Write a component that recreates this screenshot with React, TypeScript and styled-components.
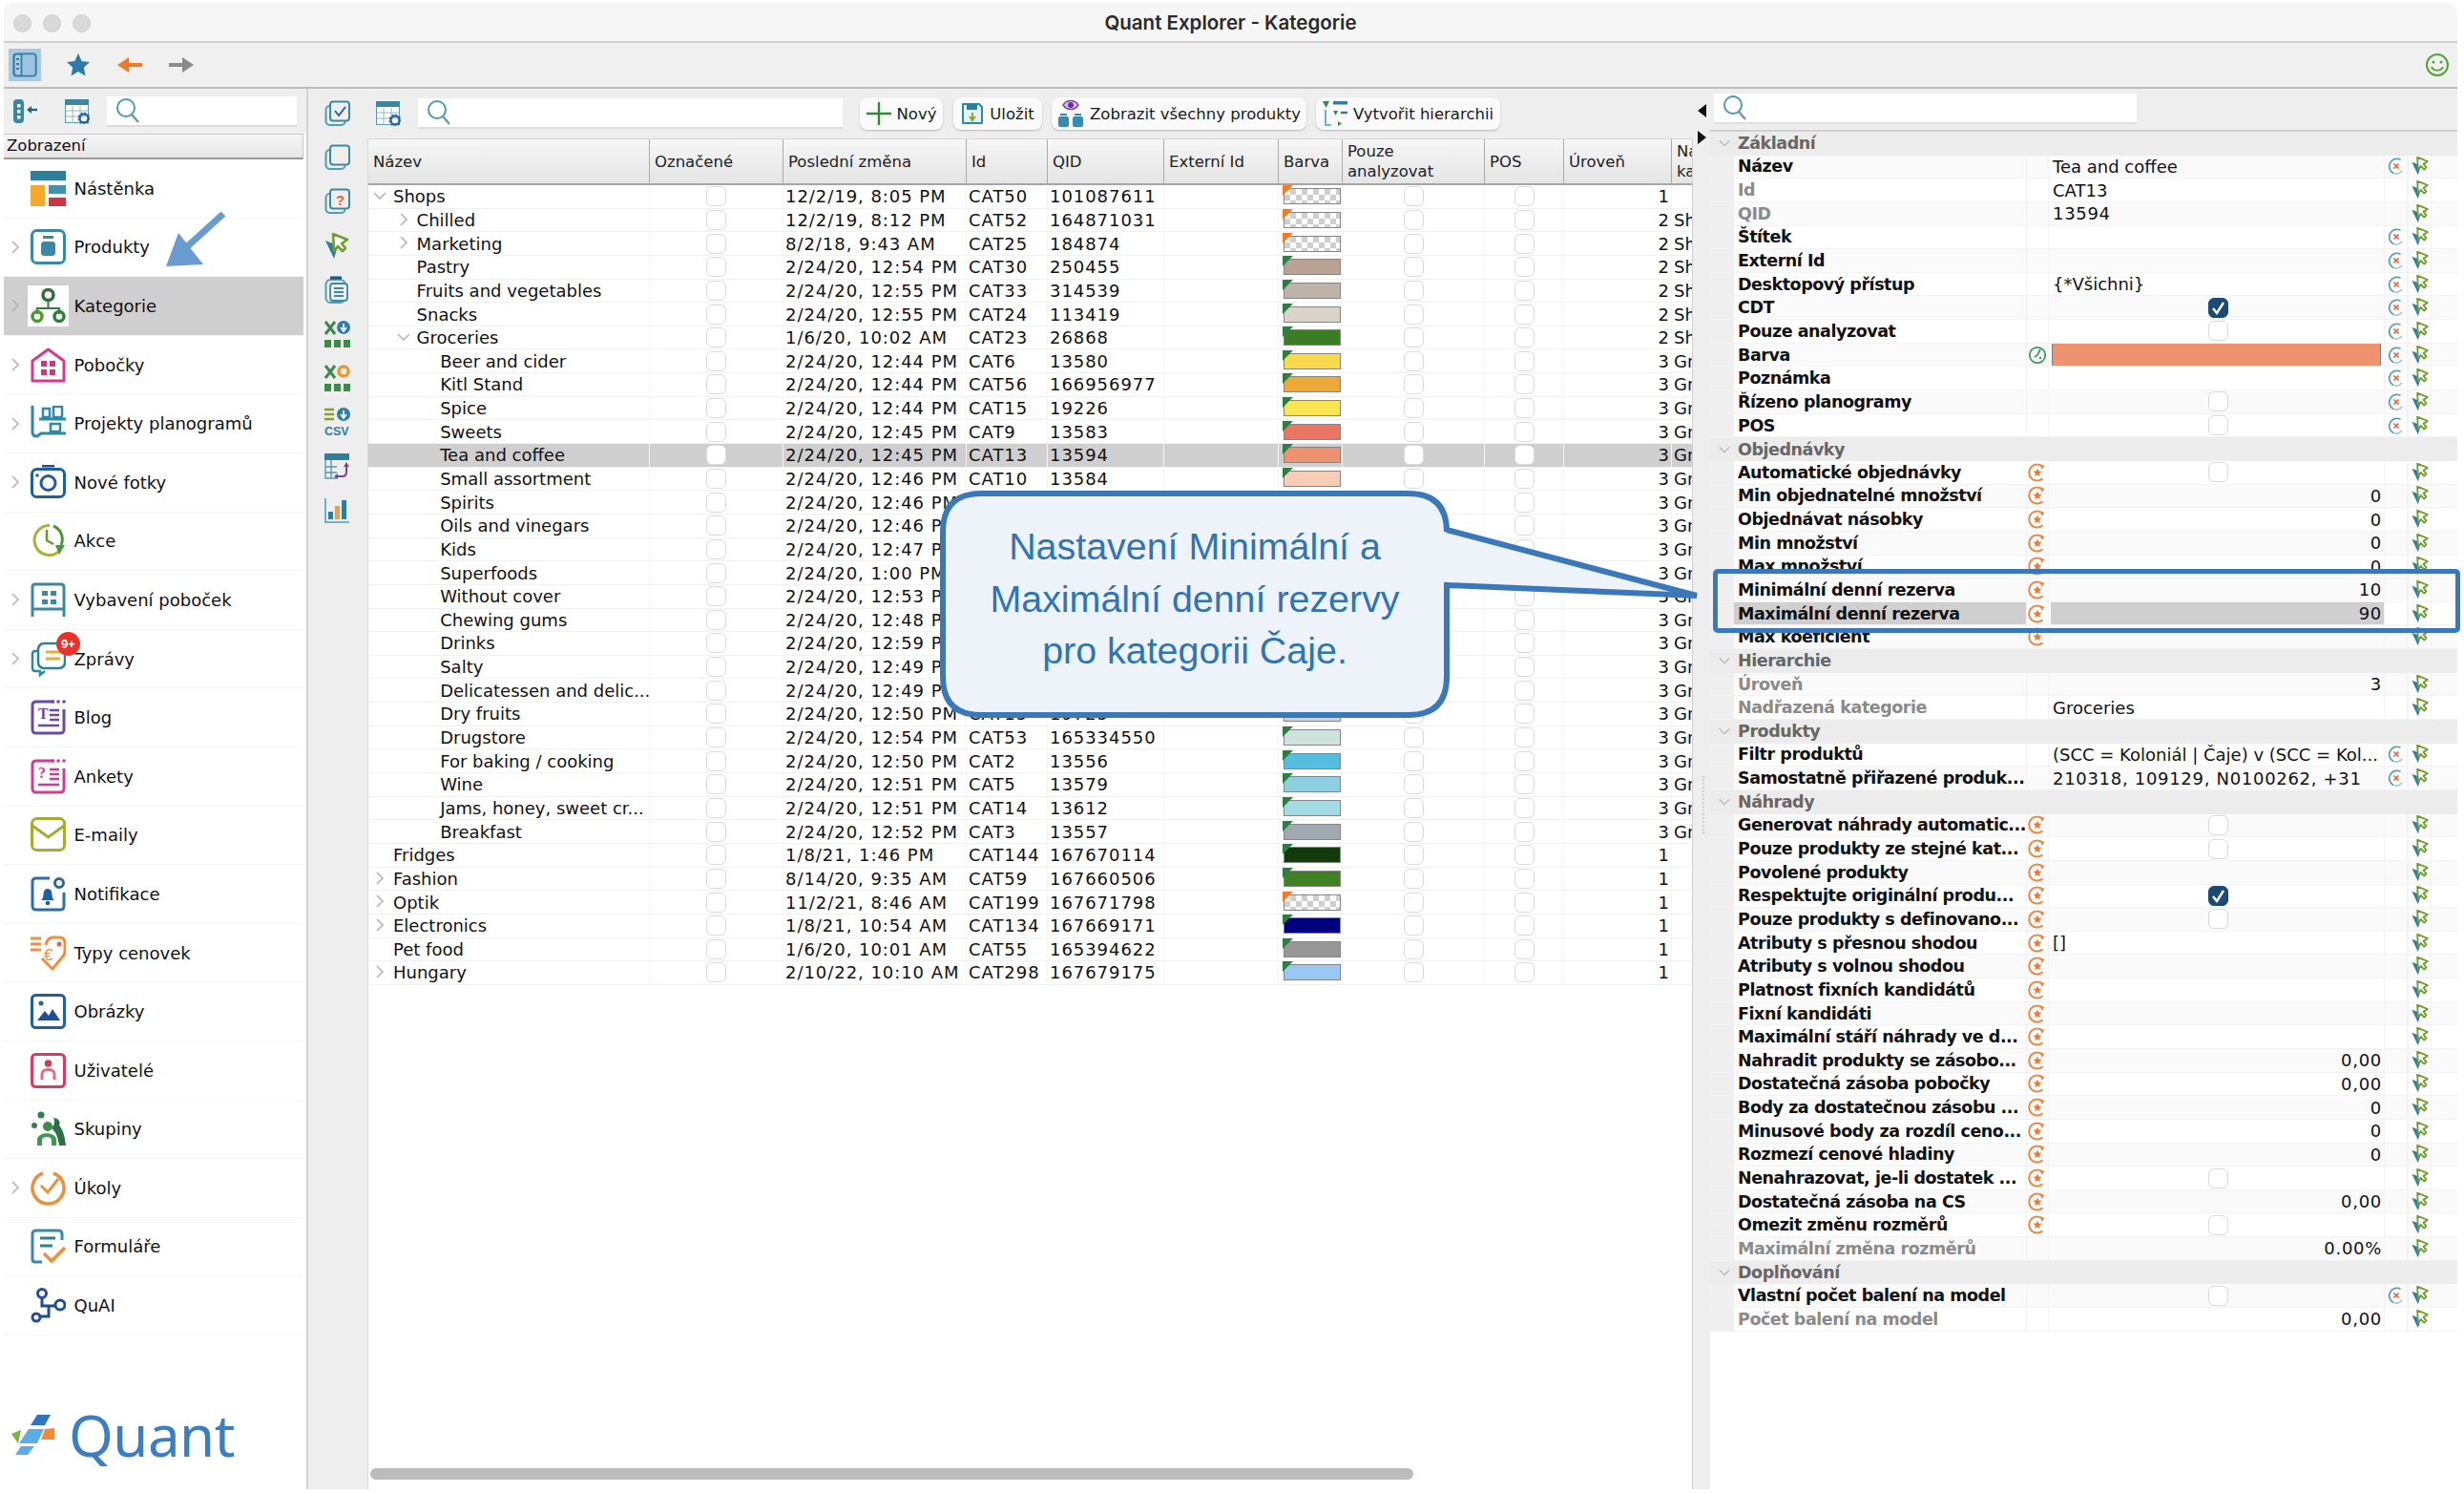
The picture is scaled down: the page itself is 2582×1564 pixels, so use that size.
import React from "react";
import styled, { createGlobalStyle } from "styled-components";

const BLUE = "#3a78b9";
const ROW = 24.65;
const FONT = `"DejaVu Sans", "Liberation Sans", sans-serif`;

const Global = createGlobalStyle`
  html, body { margin: 0; padding: 0; background: #fff; }
  #root { width: 2582px; height: 1564px; overflow: hidden; }
  * { box-sizing: border-box; }
`;

const Page = styled.div`
  width: 2582px;
  height: 1564px;
  padding: 3px 7px 4px 4px;
  background: #fff;
  font-family: ${FONT};
  color: #111;
`;
const Window = styled.div`
  position: relative;
  width: 100%;
  height: 100%;
  display: flex;
  flex-direction: column;
  background: #eeeeee;
  border-radius: 10px 10px 0 0;
`;
const TitleBar = styled.div`
  height: 42px;
  flex: none;
  position: relative;
  display: flex;
  align-items: center;
  justify-content: center;
  background: #f6f6f6;
  border-radius: 10px 10px 0 0;
  border-bottom: 2px solid #d0d0d0;
`;
const Traffic = styled.div`
  position: absolute;
  left: 10px;
  top: 12px;
  display: flex;
  gap: 12px;
`;
const Dot = styled.span`
  width: 19px;
  height: 19px;
  border-radius: 50%;
  background: #d9d9d9;
  border: 1px solid #cfcfcf;
`;
const Title = styled.div`
  font-family: Inter, "Liberation Sans", sans-serif;
  font-weight: 600;
  font-size: 20.5px;
  color: #2a2a2a;
`;
const MainBar = styled.div`
  height: 48px;
  flex: none;
  display: flex;
  align-items: center;
  padding: 0 4px 0 5px;
  background: #f0f0f0;
  border-bottom: 2px solid #bdbdbd;
`;
const MainTool = styled.div<{ $active?: boolean; $w: number; $ml?: number }>`
  width: ${(p) => p.$w}px;
  height: 34px;
  margin-left: ${(p) => p.$ml ?? 0}px;
  display: flex;
  align-items: center;
  justify-content: center;
  background: ${(p) => (p.$active ? "#aac9e6" : "transparent")};
`;
const Spacer = styled.div`
  flex: 1;
`;
const Body = styled.div`
  flex: 1;
  min-height: 0;
  display: flex;
`;
const Sidebar = styled.div`
  width: 319px;
  flex: none;
  display: flex;
  flex-direction: column;
  background: #fff;
  border-right: 2px solid #d2d2d2;
  position: relative;
`;
const SideTools = styled.div`
  height: 47px;
  flex: none;
  display: flex;
  align-items: center;
  gap: 28px;
  padding-left: 8px;
  background: #efefef;
`;
const SideSearch = styled.div`
  width: 199px;
  height: 32px;
  margin-left: -10px;
  display: flex;
  align-items: center;
  padding-left: 9px;
  background: #fff;
  border-bottom: 2px solid #dcdcdc;
`;
const ViewHead = styled.div`
  height: 27px;
  width: 314px;
  flex: none;
  padding-left: 3px;
  font-size: 16.5px;
  line-height: 24px;
  background: linear-gradient(#f6f6f6, #e6e6e6);
  border: 1px solid #c8c8c8;
  border-bottom: 2px solid #9a9a9a;
  border-left: 0;
`;
const NavList = styled.div`
  width: 314px;
  display: flex;
  flex-direction: column;
`;
const NavRow = styled.div<{ $sel?: boolean }>`
  height: 61.6px;
  flex: none;
  display: flex;
  align-items: center;
  position: relative;
  padding-left: 25px;
  background: ${(p) => (p.$sel ? "#cfcfcf" : "#fff")};
  border-bottom: 1px solid #f5f5f5;
`;
const NavChev = styled.span`
  position: absolute;
  left: 4px;
  top: 50%;
  margin-top: -8px;
  display: flex;
`;
const NavIconBox = styled.div<{ $sel?: boolean }>`
  width: 43px;
  height: 43px;
  flex: none;
  display: flex;
  align-items: center;
  justify-content: center;
  background: ${(p) => (p.$sel ? "#fff" : "transparent")};
`;
const NavLabel = styled.div`
  margin-left: 5.5px;
  font-size: 18px;
  color: #111;
`;
const Badge = styled.span`
  position: absolute;
  left: 55px;
  top: 2px;
  width: 25px;
  height: 25px;
  border-radius: 50%;
  background: #e8322a;
  color: #fff;
  font-family: "Liberation Sans", sans-serif;
  font-weight: 700;
  font-size: 13px;
  line-height: 25px;
  text-align: center;
`;
const LogoRow = styled.div`
  margin-top: auto;
  height: 76px;
  margin-bottom: 19px;
  display: flex;
  align-items: center;
  padding-left: 8px;
  gap: 14px;
`;
const LogoText = styled.div`
  font-family: "Noto Sans", Lato, sans-serif;
  font-weight: 400;
  font-size: 60px;
  line-height: 60px;
  color: #3a7fc1;
  letter-spacing: -0.5px;
`;
const Strip = styled.div`
  width: 62px;
  flex: none;
  display: flex;
  flex-direction: column;
  padding: 3px 2px 0 0;
  background: #eeeeee;
`;
const StripSlot = styled.div`
  height: 46.2px;
  flex: none;
  display: flex;
  align-items: center;
  justify-content: center;
`;
const Center = styled.div`
  width: 1389px;
  flex: none;
  display: flex;
  flex-direction: column;
  min-height: 0;
`;
const CenterTools = styled.div`
  height: 52px;
  flex: none;
  display: flex;
  align-items: center;
  padding: 0 0 0 9px;
  background: #eeeeee;
`;
const CenterSearch = styled.div`
  width: 445px;
  height: 32px;
  margin-left: 18px;
  display: flex;
  align-items: center;
  padding-left: 9px;
  background: #fff;
  border-bottom: 2px solid #dedede;
`;
const Btn = styled.div<{ $ml: number; $w: number }>`
  margin-left: ${(p) => p.$ml}px;
  width: ${(p) => p.$w}px;
  height: 34px;
  display: flex;
  align-items: center;
  justify-content: center;
  gap: 6px;
  background: #fafafa;
  border-radius: 8px;
  box-shadow: 0 1px 2px rgba(0, 0, 0, 0.22);
  font-size: 16.5px;
  white-space: nowrap;
  color: #1a1a1a;
`;
const TableWrap = styled.div`
  flex: 1;
  min-height: 0;
  display: flex;
  flex-direction: column;
  background: #fff;
  border-top: 1px solid #d8d8d8;
  border-left: 1px solid #d8d8d8;
  border-right: 1px solid #d0d0d0;
`;
const COLS = "295px 140px 192px 85px 122px 120px 67px 149px 83px 113px 21px";
const HeadRow = styled.div`
  height: 48px;
  flex: none;
  display: grid;
  grid-template-columns: ${COLS};
  background: linear-gradient(#f6f6f6, #e5e5e5);
  border-bottom: 2px solid #a6a6a6;
`;
const HeadCell = styled.div`
  display: flex;
  align-items: center;
  padding-left: 5px;
  font-size: 16.5px;
  line-height: 21px;
  border-right: 1px solid #ababab;
  overflow: hidden;
  white-space: pre-line;
  color: #222;
  &:last-child { border-right: 0; }
`;
const Rows = styled.div`
  flex: 1;
  min-height: 0;
`;
const TRow = styled.div<{ $sel?: boolean }>`
  height: ${ROW}px;
  display: grid;
  grid-template-columns: ${COLS};
  background: ${(p) => (p.$sel ? "#cfcfcf" : "#fff")};
  border-bottom: 1px solid #f1f1f1;
  font-size: 18px;
`;
const NameCell = styled.div<{ $lvl: number }>`
  position: relative;
  display: flex;
  align-items: center;
  padding-left: ${(p) => 26 + p.$lvl * 24.6}px;
  border-right: 1px solid #f5f5f5;
  white-space: nowrap;
  overflow: hidden;
`;
const TreeChev = styled.span<{ $lvl: number }>`
  position: absolute;
  left: ${(p) => 4 + p.$lvl * 24.6}px;
  top: 3px;
  display: flex;
`;
const Cell = styled.div<{ $right?: boolean; $num?: boolean }>`
  display: flex;
  align-items: center;
  justify-content: ${(p) => (p.$right ? "flex-end" : "flex-start")};
  padding: ${(p) => (p.$right ? "0 1px 0 0" : "0 0 0 2px")};
  border-right: 1px solid #f5f5f5;
  white-space: nowrap;
  overflow: hidden;
  letter-spacing: ${(p) => (p.$num ? "0.95px" : "0")};
  &:last-child { border-right: 0; }
`;
const BoxCell = styled.div`
  display: flex;
  align-items: center;
  justify-content: center;
  border-right: 1px solid #f5f5f5;
`;
const Check = styled.span<{ $on?: boolean }>`
  width: 21px;
  height: 21px;
  display: flex;
  align-items: center;
  justify-content: center;
  background: ${(p) => (p.$on ? "#1d4a72" : "#fff")};
  border: 1px solid ${(p) => (p.$on ? "#1d4a72" : "#d9d9d9")};
  border-radius: 6px;
`;
const Swatch = styled.span<{ $c?: string }>`
  position: relative;
  display: block;
  width: 60px;
  height: 17px;
  margin-left: 3px;
  border: 1.5px solid #858585;
  background: ${(p) => p.$c || "repeating-conic-gradient(#cfcfcf 0 25%, #fff 0 50%) 0 0 / 12px 12px"};
`;
const Corner = styled.span<{ $c: string }>`
  position: absolute;
  left: -2px;
  top: -4px;
  width: 0;
  height: 0;
  border-top: 11px solid ${(p) => p.$c};
  border-right: 11px solid transparent;
`;
const ScrollTrack = styled.div`
  height: 32px;
  flex: none;
  display: flex;
  align-items: center;
  padding: 0 0 0 2px;
  margin-top: auto;
`;
const ScrollThumb = styled.div`
  width: 1093px;
  height: 12px;
  border-radius: 6px;
  background: #bcbcbc;
`;
const Splitter = styled.div`
  width: 18px;
  flex: none;
  position: relative;
  background: #eeeeee;
  display: flex;
  flex-direction: column;
  align-items: center;
  padding-top: 16px;
  gap: 14px;
`;
const Grip = styled.div`
  position: absolute;
  left: 10px;
  top: 720px;
  height: 60px;
  border-left: 2px dotted #cfcfcf;
`;
const Right = styled.div`
  flex: 1;
  min-width: 0;
  display: flex;
  flex-direction: column;
  background: #fff;
`;
const RightTools = styled.div`
  height: 45px;
  flex: none;
  padding: 5px 0 0 4px;
  background: #eeeeee;
  border-bottom: 2px solid #cfcfcf;
`;
const RightSearch = styled.div`
  width: 443px;
  height: 32px;
  display: flex;
  align-items: center;
  padding-left: 9px;
  background: #fff;
  border-bottom: 2px solid #dedede;
`;
const PropCols = "25px 306px 24px 351px 25px 25px 26px";
const GroupRow = styled.div`
  height: ${ROW}px;
  flex: none;
  display: flex;
  align-items: center;
  background: #ececec;
  font-size: 17.5px;
  font-weight: 700;
  letter-spacing: -0.45px;
  color: #666;
`;
const GroupChev = styled.span`
  width: 29px;
  padding-left: 8px;
  display: flex;
`;
const PropRow = styled.div<{ $odd: boolean }>`
  height: ${ROW}px;
  flex: none;
  display: grid;
  grid-template-columns: ${PropCols};
  background: ${(p) => (p.$odd ? "#fafafa" : "#fff")};
  border-bottom: 1px solid #f3f3f3;
  font-size: 18px;
`;
const Gutter = styled.div`
  background: #efefef;
`;
const Label = styled.div<{ $dis?: boolean; $sel?: boolean }>`
  display: flex;
  align-items: center;
  padding-left: 4px;
  font-weight: 700;
  font-size: 17.5px;
  letter-spacing: -0.45px;
  color: ${(p) => (p.$dis ? "#8a8a8a" : "#111")};
  background: ${(p) => (p.$sel ? "#cfcfcf" : "transparent")};
  white-space: nowrap;
  overflow: hidden;
`;
const IconCell = styled.div`
  display: flex;
  align-items: center;
  justify-content: center;
  border-left: 1px solid #f3f3f3;
  border-right: 1px solid #f3f3f3;
`;
const Value = styled.div<{ $right?: boolean; $center?: boolean; $sel?: boolean; $num?: boolean }>`
  display: flex;
  align-items: center;
  justify-content: ${(p) => (p.$right ? "flex-end" : p.$center ? "center" : "flex-start")};
  padding: ${(p) => (p.$right ? "0 2px 0 0" : "0 0 0 4px")};
  margin-left: ${(p) => (p.$sel ? "2px" : "0")};
  background: ${(p) => (p.$sel ? "#cfcfcf" : "transparent")};
  white-space: nowrap;
  overflow: hidden;
  letter-spacing: ${(p) => (p.$num ? "0.7px" : "0")};
`;
const ColorBar = styled.span`
  display: block;
  width: 345px;
  height: 25px;
  margin-left: -1px;
  background: #ee9270;
  border: 1.5px solid #808080;
`;

const CalloutWrap = styled.div`
  position: absolute;
  left: 976px;
  top: 506px;
  width: 810px;
  height: 253px;
`;
const CalloutText = styled.div`
  position: absolute;
  left: 8px;
  top: 36px;
  width: 528px;
  text-align: center;
  font-family: "Liberation Sans", Arial, sans-serif;
  font-size: 39.4px;
  line-height: 54.5px;
  color: #2f74b5;
`;
const Highlight = styled.div`
  position: absolute;
  left: 1791px;
  top: 593px;
  width: 783px;
  height: 67px;
  border: 5px solid ${BLUE};
  border-radius: 5px;
`;
const ArrowOverlay = styled.svg`
  position: absolute;
  left: 165px;
  top: 216px;
`;

/* ---------- icons ---------- */
const Chevron = ({ open, s = 16, c = "#b5b5b5" }: { open?: boolean; s?: number; c?: string }) => (
  <svg width={s} height={s} viewBox="0 0 16 16" fill="none" stroke={c} strokeWidth="1.6">
    {open ? <path d="M2 5l6 6 6-6" /> : <path d="M5 2l6 6-6 6" />}
  </svg>
);
const SearchIcon = () => (
  <svg width="26" height="28" viewBox="0 0 26 28" fill="none">
    <circle cx="11" cy="11" r="9" stroke="#4a9ab0" strokeWidth="2" />
    <path d="M17 18l7 8" stroke="#6d95b5" strokeWidth="2.4" />
  </svg>
);
const TableGear = () => (
  <svg width="26" height="26" viewBox="0 0 26 26">
    <rect x="0.5" y="0.5" width="24" height="24" fill="#fff" stroke="#5a98ad" />
    <rect x="0" y="0" width="25" height="6" fill="#3c86a0" />
    <path d="M1 12h23M1 18h23M8 7v18M16 7v18" stroke="#8fb8c6" />
    <circle cx="20" cy="20" r="4.5" fill="none" stroke="#2a5fa8" strokeWidth="2.4" />
    <circle cx="20" cy="20" r="6" fill="none" stroke="#2a5fa8" strokeWidth="1.2" strokeDasharray="2 2" />
  </svg>
);
const CollapseIcon = () => (
  <svg width="28" height="28" viewBox="0 0 28 28">
    <rect x="2" y="1" width="11" height="25" rx="4" fill="#3c86a0" />
    <rect x="6" y="6" width="3.5" height="3.5" fill="#fff" />
    <rect x="6" y="12" width="3.5" height="3.5" fill="#fff" />
    <rect x="6" y="18" width="3.5" height="3.5" fill="#fff" />
    <path d="M27 12h-8" stroke="#2a5f80" strokeWidth="2.4" />
    <path d="M16 12l5-4v8z" fill="#2a5f80" />
  </svg>
);
const PanelIcon = () => (
  <svg width="26" height="26" viewBox="0 0 26 26" fill="none">
    <rect x="1.5" y="1.5" width="23" height="23" rx="3" stroke="#2e7f9e" strokeWidth="2.2" />
    <rect x="9.5" y="2.5" width="14" height="21" fill="#9dc3de" />
    <path d="M9.5 2v22" stroke="#2e7f9e" strokeWidth="1.8" />
    <path d="M4 7h3M4 12h3M4 17h3" stroke="#2e7f9e" strokeWidth="1.8" />
  </svg>
);
const Star = () => (
  <svg width="26" height="26" viewBox="0 0 26 26">
    <path d="M13 1l3.6 8 8.4 1-6.2 5.8 1.7 8.7L13 20l-7.5 4.5 1.7-8.7L1 10l8.4-1z" fill="#2b7aa8" />
  </svg>
);
const ArrowH = ({ dir, c }: { dir: "l" | "r"; c: string }) => (
  <svg width="26" height="20" viewBox="0 0 26 20">
    {dir === "l" ? (
      <path d="M0 10L12 2v6h14v4H12v6z" fill={c} />
    ) : (
      <path d="M26 10L14 2v6H0v4h14v6z" fill={c} />
    )}
  </svg>
);
const Smile = () => (
  <svg width="26" height="26" viewBox="0 0 26 26" fill="none" stroke="#52a335" strokeWidth="2">
    <circle cx="13" cy="13" r="11" />
    <circle cx="9" cy="10" r="1.5" fill="#52a335" stroke="none" />
    <circle cx="17" cy="10" r="1.5" fill="#52a335" stroke="none" />
    <path d="M7 15c2 5 10 5 12 0" />
  </svg>
);

const Stack = ({ inner }: { inner?: React.ReactNode }) => (
  <svg width="27" height="28" viewBox="0 0 27 28" fill="none">
    <rect x="1.5" y="6" width="20" height="20" rx="4" stroke="#4e9eb5" strokeWidth="2" />
    <rect x="6" y="1.5" width="20" height="20" rx="3" fill="#eee" stroke="#3f87a2" strokeWidth="2" />
    {inner}
  </svg>
);
const CursorIcon = ({ s = 26 }: { s?: number }) => (
  <svg width={s} height={s} viewBox="0 0 26 28" fill="none">
    <path d="M1 8l9 19 3-10 3-3z" fill="#2e7f9e" />
    <path d="M9 1l15 6-6 4 4 5-3 3-5-5-4 5z" fill="#fff" stroke="#6f9e2c" strokeWidth="2.6" strokeLinejoin="round" />
  </svg>
);
const DocIcon = () => (
  <svg width="26" height="30" viewBox="0 0 26 30" fill="none">
    <rect x="1.5" y="4" width="20" height="24" rx="5" stroke="#4e9eb5" strokeWidth="2" />
    <rect x="6" y="8" width="18" height="18" rx="3" fill="#eee" stroke="#3f87a2" strokeWidth="1.8" />
    <path d="M6 2h12" stroke="#1f4f8f" strokeWidth="3" />
    <path d="M10 13h10M10 17h10M10 21h10" stroke="#3f87a2" strokeWidth="1.8" />
  </svg>
);
const XoIcon = ({ orange }: { orange?: boolean }) => (
  <svg width="27" height="30" viewBox="0 0 27 30" fill="none">
    <path d="M1 2l10 13M11 2L1 15" stroke="#3f8a4a" strokeWidth="3" />
    {orange ? (
      <circle cx="20" cy="8" r="5" stroke="#e8993a" strokeWidth="3.5" />
    ) : (
      <>
        <circle cx="20" cy="8" r="7" fill="#2e7fa8" />
        <path d="M20 4v7M17 8l3 4 3-4" stroke="#fff" strokeWidth="1.8" />
      </>
    )}
    <rect x="0" y="21" width="7" height="8" fill="#3f8a4a" />
    <rect x="10" y="21" width="7" height="8" fill="#3f8a4a" />
    <rect x="20" y="21" width="7" height="8" fill="#3f8a4a" />
  </svg>
);
const CsvIcon = () => (
  <svg width="27" height="32" viewBox="0 0 27 32" fill="none">
    <path d="M0 3h10M0 8h10M0 13h10" stroke="#8a9a2c" strokeWidth="2.6" />
    <circle cx="20" cy="8" r="7" fill="#2e7fa8" />
    <path d="M20 4v7M17 8l3 4 3-4" stroke="#fff" strokeWidth="1.8" />
    <text x="0" y="30" fontFamily="Liberation Sans" fontWeight="700" fontSize="12.5" fill="#2e7fa8">CSV</text>
  </svg>
);
const TableArrow = () => (
  <svg width="27" height="27" viewBox="0 0 27 27" fill="none">
    <rect x="0" y="0" width="26" height="7" fill="#2e7f9e" />
    <path d="M1 7v19h12M1 14h12M1 20h12M7 7v19" stroke="#5a98ad" strokeWidth="1.4" />
    <path d="M14 24h5c3 0 4-2 4-5v-6" stroke="#7a3fa8" strokeWidth="2" />
    <path d="M23 9l3 5h-6z" fill="#7a3fa8" />
    <path d="M14 21v6l-4-3z" fill="#7a3fa8" />
  </svg>
);
const BarsIcon = () => (
  <svg width="27" height="27" viewBox="0 0 27 27">
    <path d="M1 1v25h25" fill="none" stroke="#4e9eb5" strokeWidth="1.6" />
    <rect x="4" y="15" width="5" height="8" fill="#2e7f9e" />
    <rect x="11" y="9" width="5" height="14" fill="#f09a38" />
    <rect x="18" y="3" width="5" height="20" fill="#2e7f9e" />
  </svg>
);
const StarRound = () => (
  <svg width="20" height="20" viewBox="0 0 20 20" fill="none">
    <path d="M15.5 3.8A8.5 8.5 0 1 0 15.5 16.2" stroke="#ea8a45" strokeWidth="2" />
    <path d="M12.5 1l5 2-3 4z" fill="#ea8a45" />
    <path d="M10 5.500l1.300 3 3.200.3-2.400 2.100.7 3.100-2.800-1.600-2.800 1.600.7-3.100-2.400-2.100 3.200-.3z" fill="#ea7a35" />
  </svg>
);
const GreenRound = () => (
  <svg width="20" height="20" viewBox="0 0 20 20" fill="none">
    <circle cx="10" cy="10" r="8.200" stroke="#3d9a5a" strokeWidth="1.800" />
    <path d="M13 4l-3 6-3 2" stroke="#3d9a5a" strokeWidth="1.800" />
    <circle cx="13" cy="13" r="1.200" fill="#3d9a5a" />
  </svg>
);
const Revert = () => (
  <svg width="18" height="20" viewBox="0 0 18 20" fill="none">
    <path d="M13.500 3.200A8 8 0 0 0 6 17.500" stroke="#4e9eb5" strokeWidth="1.700" />
    <path d="M6 17.500a8 8 0 0 0 9-2.500" stroke="#a8c8d4" strokeWidth="1.700" />
    <path d="M6.500 7.500l5 5M11.500 7.500l-5 5" stroke="#e8603a" strokeWidth="1.700" />
  </svg>
);

const IconJar = () => (
  <svg width="37" height="37" viewBox="0 0 37 37" fill="none">
    <rect x="1.5" y="1.500" width="34" height="34" rx="5" stroke="#3a88a8" strokeWidth="3" />
    <rect x="13" y="7" width="11" height="3" fill="#3a88a8" />
    <rect x="11" y="13" width="15" height="15" rx="3.500" fill="#3a88a8" />
  </svg>
);
const IconDash = () => (
  <svg width="37" height="37" viewBox="0 0 37 37">
    <rect x="0" y="0" width="37" height="10" fill="#2e7f9e" />
    <rect x="0" y="15" width="15" height="22" fill="#f4a92e" />
    <rect x="19" y="15" width="18" height="9" fill="#4292ad" />
    <rect x="19" y="28" width="18" height="9" fill="#cf3445" />
  </svg>
);
const IconTree = () => (
  <svg width="37" height="37" viewBox="0 0 37 37" fill="none">
    <circle cx="18.500" cy="7" r="5.500" stroke="#2e6f3a" strokeWidth="3.500" />
    <path d="M18.500 13v8M7 27v-6h23v6" stroke="#2e7f3a" strokeWidth="2" />
    <circle cx="7" cy="29.500" r="5" stroke="#4f9a2c" strokeWidth="3.500" />
    <circle cx="30" cy="29.500" r="5" stroke="#2e7f3a" strokeWidth="3.500" />
  </svg>
);
const IconHouse = () => (
  <svg width="37" height="37" viewBox="0 0 37 37" fill="none">
    <path d="M2 14L18.500 2 35 14v21H2z" stroke="#d63a8e" strokeWidth="3" strokeLinejoin="round" />
    <rect x="11" y="14" width="6" height="6" fill="#c83a86" />
    <rect x="20" y="14" width="6" height="6" fill="#c83a86" />
    <rect x="11" y="23" width="6" height="6" fill="#c83a86" />
    <rect x="20" y="23" width="6" height="6" fill="#c83a86" />
  </svg>
);
const IconShelf = () => (
  <svg width="37" height="37" viewBox="0 0 37 37" fill="none" stroke="#2e88a8" strokeWidth="3">
    <path d="M2 0v28c0 3 2 4 5 4l4-3h26" />
    <path d="M9 14h28" />
    <rect x="13" y="3" width="7" height="9" strokeWidth="2.500" />
    <rect x="24" y="1" width="9" height="11" strokeWidth="2.500" />
    <rect x="21" y="19" width="10" height="8" strokeWidth="2.500" />
  </svg>
);
const IconCamera = () => (
  <svg width="37" height="37" viewBox="0 0 37 37" fill="none">
    <rect x="1.500" y="4.500" width="34" height="29" rx="5" stroke="#1f5fa0" strokeWidth="3" />
    <path d="M12 1h13" stroke="#2a4a80" strokeWidth="3" />
    <circle cx="18.500" cy="19" r="7.500" stroke="#2a5a98" strokeWidth="3" />
    <circle cx="7" cy="11" r="1.800" fill="#1f5fa0" />
  </svg>
);
const IconClock = () => (
  <svg width="37" height="37" viewBox="0 0 37 37" fill="none">
    <path d="M20 2.500a15.500 15.500 0 1 0 10 27" stroke="#a4b534" strokeWidth="3" />
    <path d="M24 3a15 15 0 0 1 8 20" stroke="#4a9a3a" strokeWidth="3" />
    <path d="M17 7v11l7 4" stroke="#6a9a2c" strokeWidth="2.500" />
    <path d="M26 23h10l-6 10z" fill="#4a9a3a" />
  </svg>
);
const IconFixture = () => (
  <svg width="37" height="37" viewBox="0 0 37 37" fill="none" stroke="#3a88a8" strokeWidth="3">
    <path d="M2 36V5c0-2 1-3 3-3h27c2 0 3 1 3 3v31" />
    <path d="M2 28h33" />
    <g fill="#3a88a8" stroke="none">
      <rect x="12" y="9" width="6" height="5" />
      <rect x="21" y="9" width="6" height="5" />
      <rect x="12" y="18" width="6" height="5" />
      <rect x="21" y="18" width="6" height="5" />
    </g>
  </svg>
);
const IconChat = () => (
  <svg width="37" height="37" viewBox="0 0 37 37" fill="none">
    <path d="M7 10H5c-2 0-3 1-3 3v15c0 2 1 3 3 3h5v4l5-4" stroke="#2e88a8" strokeWidth="2.500" />
    <rect x="8" y="2" width="28" height="26" rx="6" stroke="#2e7f9e" strokeWidth="2.500" fill="#fff" />
    <path d="M16 11h15M16 18h15" stroke="#f0a83a" strokeWidth="3" />
  </svg>
);
const IconText = ({ c, ch }: { c: string; ch: string }) => (
  <svg width="37" height="37" viewBox="0 0 37 37" fill="none">
    <path d="M25 2H6C3 2 2 3 2 6v25c0 3 1 4 4 4h25c3 0 4-1 4-4V10" stroke={c} strokeWidth="3" />
    <g fill={c}>
      <circle cx="23" cy="2" r="1.800" />
      <circle cx="29" cy="2" r="1.800" />
      <circle cx="35" cy="2" r="1.800" />
    </g>
    <text x="8" y="20" fontFamily="Liberation Serif" fontWeight="700" fontSize="16" fill={c}>{ch}</text>
    <path d="M20 11h10M20 16h10M20 21h10M8 27h22" stroke={c} strokeWidth="2.500" />
  </svg>
);
const IconMail = () => (
  <svg width="37" height="37" viewBox="0 0 37 37" fill="none" stroke="#a3ad2e" strokeWidth="3">
    <rect x="1.500" y="1.500" width="34" height="33" rx="5" />
    <path d="M2 9l16.500 12L35 9" />
  </svg>
);
const IconBell = () => (
  <svg width="37" height="37" viewBox="0 0 37 37" fill="none">
    <path d="M20 2H6C3 2 2 3 2 6v25c0 3 1 4 4 4h25c3 0 4-1 4-4V17" stroke="#2a6fa8" strokeWidth="3" />
    <path d="M11 25c3-2 2-6 3-9 1-4 7-4 8 0 1 3 0 7 3 9z" fill="#1f5fa0" />
    <circle cx="18" cy="28" r="2.300" fill="#1f5fa0" />
    <circle cx="30" cy="7" r="4.500" stroke="#2e6a90" strokeWidth="3" />
  </svg>
);
const IconTag = () => (
  <svg width="37" height="37" viewBox="0 0 37 37" fill="none" stroke="#ee8f3c">
    <path d="M0 3h11M0 9h11M0 15h11" strokeWidth="3" />
    <path d="M16 10c1-5 3-8 8-8h6c4 0 6 2 6 6v9c0 3-1 4-3 6L23 35 12 24" strokeWidth="3" strokeLinejoin="round" />
    <circle cx="30" cy="9" r="2.500" fill="#e8604a" stroke="none" />
    <text x="14" y="26" fontFamily="Liberation Sans" fontSize="17" fill="#ee8f3c" stroke="none">€</text>
  </svg>
);
const IconPicture = () => (
  <svg width="37" height="37" viewBox="0 0 37 37" fill="none">
    <rect x="1.500" y="1.500" width="34" height="34" rx="4" stroke="#1f5fa8" strokeWidth="3" />
    <circle cx="11" cy="10" r="2.500" fill="#1f5fa8" />
    <path d="M7 28l8-10 4 5 4-7 8 12z" fill="#1f4f98" />
  </svg>
);
const IconUser = () => (
  <svg width="37" height="37" viewBox="0 0 37 37" fill="none">
    <rect x="1.500" y="1.500" width="34" height="34" rx="4" stroke="#d83a60" strokeWidth="3" />
    <circle cx="18.500" cy="11" r="3.800" fill="#d83a50" />
    <path d="M12 28v-6c0-6 13-6 13 0v6" stroke="#e86a80" strokeWidth="3" />
  </svg>
);
const IconGroup = () => (
  <svg width="37" height="37" viewBox="0 0 37 37">
    <circle cx="11" cy="4" r="3.500" fill="#2e7f4a" />
    <circle cx="4" cy="15" r="3" fill="#2e7f4a" />
    <circle cx="18" cy="16" r="5" fill="#3a8a4a" />
    <path d="M7 36V30c0-9 20-9 20 0v6h-5v-6c0-4-10-4-10 0v6z" fill="#3f9a4f" />
    <path d="M24 7c5 0 8 4 6 8 4 4 6 12 7 21h-7c-1-8-3-14-8-18 3-3 4-7 2-11z" fill="#2e6f4a" />
  </svg>
);
const IconTask = () => (
  <svg width="37" height="37" viewBox="0 0 37 37" fill="none" stroke="#ee8f3c">
    <path d="M24 3a16.500 16.500 0 1 1-11 0" strokeWidth="3.500" />
    <path d="M11 16l7 7 11-14" strokeWidth="3" />
  </svg>
);
const IconForm = () => (
  <svg width="37" height="37" viewBox="0 0 37 37" fill="none">
    <path d="M33 12V6c0-3-1-4-4-4H6C3 2 2 3 2 6v26c0 2 1 3 3 3h7" stroke="#3a88a8" strokeWidth="3" />
    <path d="M10 10h16M10 18h13" stroke="#2e7f9e" strokeWidth="3" />
    <path d="M14 26l8 8 14-14" stroke="#ee8f3c" strokeWidth="3.500" />
  </svg>
);
const IconNodes = () => (
  <svg width="37" height="37" viewBox="0 0 37 37" fill="none" stroke="#1f4f8f" strokeWidth="3">
    <circle cx="12" cy="6" r="4.500" />
    <circle cx="6" cy="31" r="4" />
    <circle cx="31" cy="18" r="5" />
    <path d="M12 11v8h14M10 30h9V19" />
  </svg>
);
const QuantMark = () => (
  <svg width="46" height="42" viewBox="0 0 46 42">
    <path d="M27 0h14l-6 11H20z" fill="#2f74c0" />
    <path d="M0 20l10-4-3 14z" fill="#7cb342" />
    <path d="M18 15h16l-7 15H8z" fill="#5aaee8" />
    <path d="M35 15l10-1v12H31z" fill="#f08a3a" />
    <path d="M10 33h14l-7 9H4z" fill="#5aaee8" />
  </svg>
);
const PlusIcon = () => (
  <svg width="26" height="26" viewBox="0 0 26 26" fill="none" stroke="#2f8a3a" strokeWidth="2.400">
    <path d="M13 1v24M0 13h26" />
  </svg>
);
const SaveIcon = () => (
  <svg width="24" height="24" viewBox="0 0 24 24" fill="none">
    <path d="M2 2h17l3 3v17H2z" fill="#e6f2f8" stroke="#2e88a8" strokeWidth="2" strokeLinejoin="round" />
    <rect x="6" y="2" width="11" height="6" fill="#2e7f9e" />
    <path d="M12 11v7M9 15l3 4 3-4" stroke="#8aa82c" strokeWidth="2" />
  </svg>
);
const EyeJars = () => (
  <svg width="28" height="30" viewBox="0 0 28 30" fill="none">
    <path d="M6 6c4-6 12-6 16 0-4 6-12 6-16 0z" fill="#d9c2ee" stroke="#7a3fa8" strokeWidth="1.400" />
    <circle cx="14" cy="6" r="3" fill="#6a2fa0" />
    <rect x="1" y="18" width="11" height="11" rx="2" fill="#3a8ab0" />
    <rect x="3" y="15" width="7" height="2" fill="#3a8ab0" />
    <rect x="16" y="18" width="11" height="11" rx="2" fill="#3a8ab0" />
    <rect x="18" y="15" width="7" height="2" fill="#3a8ab0" />
  </svg>
);
const HierIcon = () => (
  <svg width="26" height="28" viewBox="0 0 26 28" fill="none">
    <path d="M0 1h7l-3.500 7z" fill="#3a8a4a" />
    <rect x="11" y="1" width="15" height="3.500" fill="#2e7f9e" />
    <path d="M3 10v16h6" stroke="#4e9eb5" strokeWidth="1.600" />
    <path d="M11 11h5l-2.500 5z" fill="#3a8a4a" />
    <path d="M19 13h7" stroke="#2e7f9e" strokeWidth="2.500" />
    <path d="M16 22v5l4-2.500z" fill="#3a8a4a" />
  </svg>
);

/* ---------- data ---------- */
type Nav = { label: string; icon: React.ReactNode; chev?: boolean; sel?: boolean; badge?: boolean };
const NAV: Nav[] = [
  { label: "Nástěnka", icon: <IconDash /> },
  { label: "Produkty", icon: <IconJar />, chev: true },
  { label: "Kategorie", icon: <IconTree />, chev: true, sel: true },
  { label: "Pobočky", icon: <IconHouse />, chev: true },
  { label: "Projekty planogramů", icon: <IconShelf />, chev: true },
  { label: "Nové fotky", icon: <IconCamera />, chev: true },
  { label: "Akce", icon: <IconClock /> },
  { label: "Vybavení poboček", icon: <IconFixture />, chev: true },
  { label: "Zprávy", icon: <IconChat />, chev: true, badge: true },
  { label: "Blog", icon: <IconText c="#6a4aa0" ch="T" /> },
  { label: "Ankety", icon: <IconText c="#d03a98" ch="?" /> },
  { label: "E-maily", icon: <IconMail /> },
  { label: "Notifikace", icon: <IconBell /> },
  { label: "Typy cenovek", icon: <IconTag /> },
  { label: "Obrázky", icon: <IconPicture /> },
  { label: "Uživatelé", icon: <IconUser /> },
  { label: "Skupiny", icon: <IconGroup /> },
  { label: "Úkoly", icon: <IconTask />, chev: true },
  { label: "Formuláře", icon: <IconForm /> },
  { label: "QuAI", icon: <IconNodes /> },
];

type Row = [string, number, "o" | "c" | "", string, string, string, string | null, string, string];
const d = (t: string) => `2/24/20, ${t} PM`;
const TREE: Row[] = [
  ["Shops", 0, "o", "12/2/19, 8:05 PM", "CAT50", "101087611", null, "1", ""],
  ["Chilled", 1, "c", "12/2/19, 8:12 PM", "CAT52", "164871031", null, "2", "Sh"],
  ["Marketing", 1, "c", "8/2/18, 9:43 AM", "CAT25", "184874", null, "2", "Sh"],
  ["Pastry", 1, "", d("12:54"), "CAT30", "250455", "#b9a294", "2", "Sh"],
  ["Fruits and vegetables", 1, "", d("12:55"), "CAT33", "314539", "#bdb3a9", "2", "Sh"],
  ["Snacks", 1, "", d("12:55"), "CAT24", "113419", "#d9d5ca", "2", "Sh"],
  ["Groceries", 1, "o", "1/6/20, 10:02 AM", "CAT23", "26868", "#3a7d24", "2", "Sh"],
  ["Beer and cider", 2, "", d("12:44"), "CAT6", "13580", "#f6da4c", "3", "Gr"],
  ["Kitl Stand", 2, "", d("12:44"), "CAT56", "166956977", "#eeaa36", "3", "Gr"],
  ["Spice", 2, "", d("12:44"), "CAT15", "19226", "#fbe552", "3", "Gr"],
  ["Sweets", 2, "", d("12:45"), "CAT9", "13583", "#ea7561", "3", "Gr"],
  ["Tea and coffee", 2, "", d("12:45"), "CAT13", "13594", "#ee9270", "3", "Gr"],
  ["Small assortment", 2, "", d("12:46"), "CAT10", "13584", "#f6cdb6", "3", "Gr"],
  ["Spirits", 2, "", d("12:46"), "", "", "#eeeeee", "3", "Gr"],
  ["Oils and vinegars", 2, "", d("12:46"), "", "", "#eeeeee", "3", "Gr"],
  ["Kids", 2, "", d("12:47"), "", "", "#eeeeee", "3", "Gr"],
  ["Superfoods", 2, "", "2/24/20, 1:00 PM", "", "", "#eeeeee", "3", "Gr"],
  ["Without cover", 2, "", d("12:53"), "", "", "#eeeeee", "3", "Gr"],
  ["Chewing gums", 2, "", d("12:48"), "", "", "#eeeeee", "3", "Gr"],
  ["Drinks", 2, "", d("12:59"), "", "", "#eeeeee", "3", "Gr"],
  ["Salty", 2, "", d("12:49"), "", "", "#eeeeee", "3", "Gr"],
  ["Delicatessen and delic...", 2, "", d("12:49"), "", "", "#eeeeee", "3", "Gr"],
  ["Dry fruits", 2, "", d("12:50"), "CAT15", "19725", "#c9d3de", "3", "Gr"],
  ["Drugstore", 2, "", d("12:54"), "CAT53", "165334550", "#cde3dc", "3", "Gr"],
  ["For baking / cooking", 2, "", d("12:50"), "CAT2", "13556", "#55bde0", "3", "Gr"],
  ["Wine", 2, "", d("12:51"), "CAT5", "13579", "#8cd0e2", "3", "Gr"],
  ["Jams, honey, sweet cr...", 2, "", d("12:51"), "CAT14", "13612", "#a3dbe5", "3", "Gr"],
  ["Breakfast", 2, "", d("12:52"), "CAT3", "13557", "#a0a8b0", "3", "Gr"],
  ["Fridges", 0, "", "1/8/21, 1:46 PM", "CAT144", "167670114", "#123a0a", "1", ""],
  ["Fashion", 0, "c", "8/14/20, 9:35 AM", "CAT59", "167660506", "#3f8223", "1", ""],
  ["Optik", 0, "c", "11/2/21, 8:46 AM", "CAT199", "167671798", null, "1", ""],
  ["Electronics", 0, "c", "1/8/21, 10:54 AM", "CAT134", "167669171", "#00007f", "1", ""],
  ["Pet food", 0, "", "1/6/20, 10:01 AM", "CAT55", "165394622", "#969696", "1", ""],
  ["Hungary", 0, "c", "2/10/22, 10:10 AM", "CAT298", "167679175", "#99c8f5", "1", ""],
];
const HEADS = ["Název", "Označené", "Poslední změna", "Id", "QID", "Externí Id", "Barva", "Pouze\nanalyzovat", "POS", "Úroveň", "Nadřazená\nkategorie"];

type P = {
  g?: string;
  l?: string;
  v?: string;
  dis?: boolean;
  st?: boolean;
  rev?: boolean;
  box?: "on" | "off";
  right?: boolean;
  sel?: boolean;
  color?: boolean;
};
const base = (l: string, v?: string, extra: Partial<P> = {}): P => ({ l, v, rev: true, ...extra });
const ord = (l: string, v?: string, extra: Partial<P> = {}): P => ({ l, v, st: true, ...extra });
const PROPS: P[] = [
  { g: "Základní" },
  base("Název", "Tea and coffee"),
  { l: "Id", v: "CAT13", dis: true },
  { l: "QID", v: "13594", dis: true },
  base("Štítek"),
  base("Externí Id"),
  base("Desktopový přístup", "{*Všichni}"),
  base("CDT", undefined, { box: "on" }),
  base("Pouze analyzovat", undefined, { box: "off" }),
  base("Barva", undefined, { color: true }),
  base("Poznámka"),
  base("Řízeno planogramy", undefined, { box: "off" }),
  base("POS", undefined, { box: "off" }),
  { g: "Objednávky" },
  ord("Automatické objednávky", undefined, { box: "off" }),
  ord("Min objednatelné množství", "0", { right: true }),
  ord("Objednávat násobky", "0", { right: true }),
  ord("Min množství", "0", { right: true }),
  ord("Max množství", "0", { right: true }),
  ord("Minimální denní rezerva", "10", { right: true }),
  ord("Maximální denní rezerva", "90", { right: true, sel: true }),
  ord("Max koeficient"),
  { g: "Hierarchie" },
  { l: "Úroveň", v: "3", dis: true, right: true },
  { l: "Nadřazená kategorie", v: "Groceries", dis: true },
  { g: "Produkty" },
  base("Filtr produktů", "(SCC = Koloniál | Čaje) v (SCC = Kol..."),
  base("Samostatně přiřazené produk...", "210318, 109129, N0100262, +31"),
  { g: "Náhrady" },
  ord("Generovat náhrady automatic...", undefined, { box: "off" }),
  ord("Pouze produkty ze stejné kat...", undefined, { box: "off" }),
  ord("Povolené produkty"),
  ord("Respektujte originální produ...", undefined, { box: "on" }),
  ord("Pouze produkty s definovano...", undefined, { box: "off" }),
  ord("Atributy s přesnou shodou", "[]"),
  ord("Atributy s volnou shodou"),
  ord("Platnost fixních kandidátů"),
  ord("Fixní kandidáti"),
  ord("Maximální stáří náhrady ve d..."),
  ord("Nahradit produkty se zásobo...", "0,00", { right: true }),
  ord("Dostatečná zásoba pobočky", "0,00", { right: true }),
  ord("Body za dostatečnou zásobu ...", "0", { right: true }),
  ord("Minusové body za rozdíl ceno...", "0", { right: true }),
  ord("Rozmezí cenové hladiny", "0", { right: true }),
  ord("Nenahrazovat, je-li dostatek ...", undefined, { box: "off" }),
  ord("Dostatečná zásoba na CS", "0,00", { right: true }),
  ord("Omezit změnu rozměrů", undefined, { box: "off" }),
  { l: "Maximální změna rozměrů", v: "0.00%", dis: true, right: true },
  { g: "Doplňování" },
  base("Vlastní počet balení na model", undefined, { box: "off" }),
  { l: "Počet balení na model", v: "0,00", dis: true, right: true },
];

const CheckMark = () => (
  <svg width="15" height="15" viewBox="0 0 15 15" fill="none" stroke="#fff" strokeWidth="2.400">
    <path d="M2 8l4 5 7-11" />
  </svg>
);

export default function App() {
  return (
    <Page>
      <Global />
      <Window>
        <TitleBar>
          <Traffic>
            <Dot />
            <Dot />
            <Dot />
          </Traffic>
          <Title>Quant Explorer - Kategorie</Title>
        </TitleBar>
        <MainBar>
          <MainTool $active $w={34}><PanelIcon /></MainTool>
          <MainTool $w={46} $ml={16}><Star /></MainTool>
          <MainTool $w={46} $ml={8}><ArrowH dir="l" c="#ee7a30" /></MainTool>
          <MainTool $w={46} $ml={8}><ArrowH dir="r" c="#8a8a8a" /></MainTool>
          <Spacer />
          <MainTool $w={34}><Smile /></MainTool>
        </MainBar>
        <Body>
          <Sidebar>
            <SideTools>
              <CollapseIcon />
              <TableGear />
              <SideSearch><SearchIcon /></SideSearch>
            </SideTools>
            <ViewHead>Zobrazení</ViewHead>
            <NavList>
              {NAV.map((n) => (
                <NavRow key={n.label} $sel={n.sel}>
                  {n.chev && <NavChev><Chevron s={16} /></NavChev>}
                  <NavIconBox $sel={n.sel}>{n.icon}</NavIconBox>
                  <NavLabel>{n.label}</NavLabel>
                  {n.badge && <Badge>9+</Badge>}
                </NavRow>
              ))}
            </NavList>
            <LogoRow>
              <QuantMark />
              <LogoText>Quant</LogoText>
            </LogoRow>
          </Sidebar>
          <Strip>
            <StripSlot><Stack inner={<path d="M11 11l4 5 7-9" stroke="#2a5fa8" strokeWidth="2" />} /></StripSlot>
            <StripSlot><Stack /></StripSlot>
            <StripSlot><Stack inner={<text x="12" y="18" fontFamily="Liberation Sans" fontWeight="700" fontSize="15" fill="#e8603a">?</text>} /></StripSlot>
            <StripSlot><CursorIcon s={28} /></StripSlot>
            <StripSlot><DocIcon /></StripSlot>
            <StripSlot><XoIcon /></StripSlot>
            <StripSlot><XoIcon orange /></StripSlot>
            <StripSlot><CsvIcon /></StripSlot>
            <StripSlot><TableArrow /></StripSlot>
            <StripSlot><BarsIcon /></StripSlot>
          </Strip>
          <Center>
            <CenterTools>
              <TableGear />
              <CenterSearch><SearchIcon /></CenterSearch>
              <Btn $ml={18} $w={87}><PlusIcon />Nový</Btn>
              <Btn $ml={11} $w={93}><SaveIcon />Uložit</Btn>
              <Btn $ml={10} $w={267}><EyeJars />Zobrazit všechny produkty</Btn>
              <Btn $ml={10} $w={193}><HierIcon />Vytvořit hierarchii</Btn>
            </CenterTools>
            <TableWrap>
              <HeadRow>
                {HEADS.map((h) => (
                  <HeadCell key={h}>{h}</HeadCell>
                ))}
              </HeadRow>
              <Rows>
                {TREE.map((r, i) => {
                  const [name, lvl, chev, date, id, qid, color, level, parent] = r;
                  const orange = color === null;
                  return (
                    <TRow key={name + i} $sel={name === "Tea and coffee"}>
                      <NameCell $lvl={lvl}>
                        {chev && (
                          <TreeChev $lvl={lvl}><Chevron open={chev === "o"} /></TreeChev>
                        )}
                        {name}
                      </NameCell>
                      <BoxCell><Check /></BoxCell>
                      <Cell $num>{date}</Cell>
                      <Cell $num>{id}</Cell>
                      <Cell $num>{qid}</Cell>
                      <Cell />
                      <Cell>
                        <Swatch $c={color ?? undefined}>
                          <Corner $c={orange ? "#f47a28" : "#2e7d46"} />
                        </Swatch>
                      </Cell>
                      <BoxCell><Check /></BoxCell>
                      <BoxCell><Check /></BoxCell>
                      <Cell $right $num>{level}</Cell>
                      <Cell>{parent}</Cell>
                    </TRow>
                  );
                })}
              </Rows>
              <ScrollTrack><ScrollThumb /></ScrollTrack>
            </TableWrap>
          </Center>
          <Splitter>
            <svg width="9" height="14" viewBox="0 0 9 14"><path d="M9 0v14L0 7z" fill="#111" /></svg>
            <svg width="9" height="14" viewBox="0 0 9 14"><path d="M0 0v14l9-7z" fill="#111" /></svg>
            <Grip />
          </Splitter>
          <Right>
            <RightTools>
              <RightSearch><SearchIcon /></RightSearch>
            </RightTools>
            {PROPS.map((p, i) =>
              p.g ? (
                <GroupRow key={p.g}>
                  <GroupChev><Chevron open s={14} /></GroupChev>
                  {p.g}
                </GroupRow>
              ) : (
                <PropRow key={p.l} $odd={i % 2 === 1}>
                  <Gutter />
                  <Label $dis={p.dis} $sel={p.sel}>{p.l}</Label>
                  <IconCell>
                    {p.st && <StarRound />}
                    {p.color && <GreenRound />}
                  </IconCell>
                  <Value
                    $right={p.right}
                    $center={!!p.box}
                    $sel={p.sel}
                    $num={/^[\d,.%+ N]+/.test(p.v ?? "")}
                  >
                    {p.box && <Check $on={p.box === "on"}>{p.box === "on" && <CheckMark />}</Check>}
                    {p.color && <ColorBar />}
                    {p.v}
                  </Value>
                  <IconCell>{p.rev && <Revert />}</IconCell>
                  <IconCell><CursorIcon s={20} /></IconCell>
                  <div />
                </PropRow>
              )
            )}
          </Right>
        </Body>
        <ArrowOverlay width="70" height="70" viewBox="0 0 70 70">
          <path d="M65 5L22 44" stroke="#6a9bd0" strokeWidth="7" />
          <path d="M5 60L18 25l26 33z" fill="#6a9bd0" />
        </ArrowOverlay>
        <CalloutWrap>
          <svg width="810" height="253" viewBox="0 0 810 253" fill="none">
            <path
              d="M48 8H496Q536 8 536 48V46L798 115L536 104V200Q536 240 496 240H48Q8 240 8 200V48Q8 8 48 8Z"
              fill="#eef3f9"
              stroke={BLUE}
              strokeWidth="6"
            />
          </svg>
          <CalloutText>
            Nastavení Minimální a
            <br />
            Maximální denní rezervy
            <br />
            pro kategorii Čaje.
          </CalloutText>
        </CalloutWrap>
        <Highlight />
      </Window>
    </Page>
  );
}
